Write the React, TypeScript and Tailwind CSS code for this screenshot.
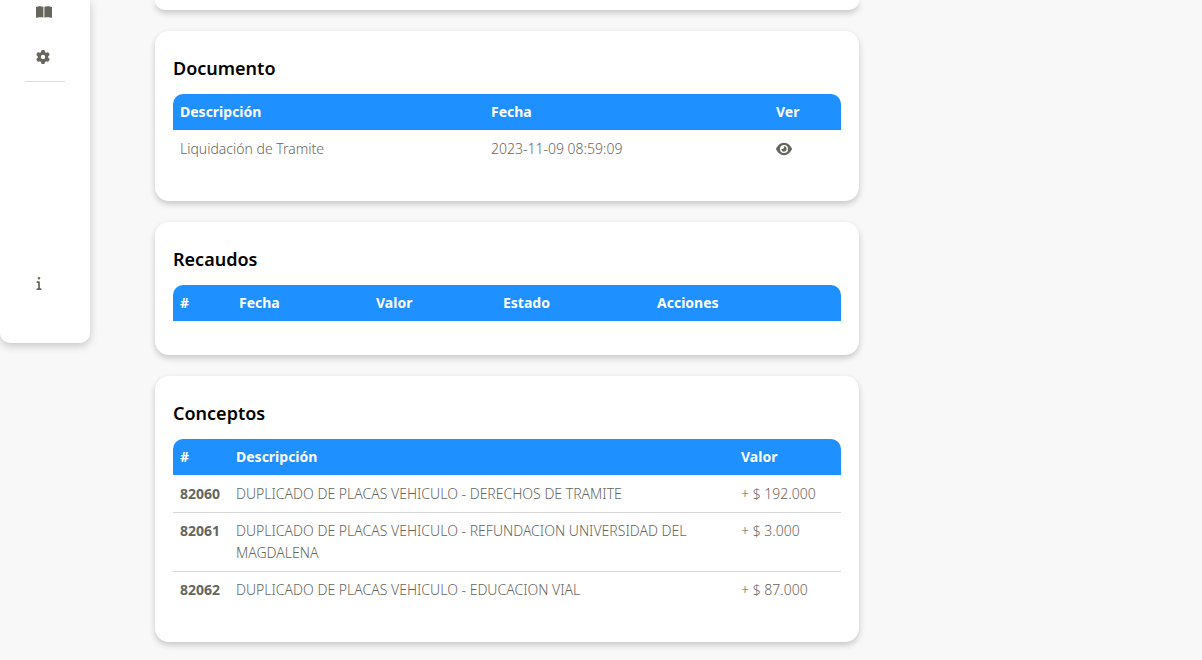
import React from 'react';
import { FaEye, FaGear, FaInfo } from 'react-icons/fa6';

const documentos = [
  { id: 1, descripcion: 'Liquidación de Tramite', fecha: '2023-11-09 08:59:09' }
];

const conceptos = [
  { id: 82060, descripcion: 'DUPLICADO DE PLACAS VEHICULO - DERECHOS DE TRAMITE', valor: '+ $ 192.000' },
  { id: 82061, descripcion: 'DUPLICADO DE PLACAS VEHICULO - REFUNDACION UNIVERSIDAD DEL MAGDALENA', valor: '+ $ 3.000' },
  { id: 82062, descripcion: 'DUPLICADO DE PLACAS VEHICULO - EDUCACION VIAL', valor: '+ $ 87.000' }
];

const BookIcon = () => (
  <svg width="18" height="14" viewBox="0 0 18 14" fill="currentColor" aria-hidden="true">
    <path d="M1 2.2C2.6 1.2 5.9.9 8.4 1.8V12.6C6 11.9 3.2 12 1 12.8Z" />
    <path d="M9.4 1.8C12 .9 15.3 1.2 17 2.2V12.8C14.8 12 12 11.9 9.4 12.6Z" />
  </svg>
);

const Card = ({ title, children }: { title: string; children: React.ReactNode }) => (
  <section className="bg-white rounded-[14px] shadow-[0_3px_6px_rgba(0,0,0,0.2)] px-[18px] pt-[18px] pb-[34px]">
    <h2 className="text-lg leading-[38px] mb-[7px] font-semibold text-black">{title}</h2>
    {children}
  </section>
);

const Table = ({ columns, children }: { columns: { label: string; width: string }[]; children?: React.ReactNode }) => (
  <table className="w-full table-fixed text-left text-sm leading-[22px]">
    <thead className="text-white">
      <tr>
        {columns.map((col) => (
          <th
            key={col.label}
            className={`${col.width} bg-[#1e90ff] p-[7px] font-bold first:rounded-tl-[10px] last:rounded-tr-[10px]`}
          >
            {col.label}
          </th>
        ))}
      </tr>
    </thead>
    <tbody className="font-light">{children}</tbody>
  </table>
);

const Sidebar = () => (
  <aside className="w-[90px] shrink-0 self-start bg-white rounded-b-[10px] shadow-[0_3px_8px_rgba(0,0,0,0.2)] pb-[49px]">
    <nav className="flex flex-col">
      <a href="#manual" aria-label="Manual" className="flex h-6 items-center pl-[35px]">
        <BookIcon />
      </a>
      <a href="#ajustes" aria-label="Ajustes" className="mt-[21px] flex h-6 items-center pl-9 text-sm">
        <FaGear />
      </a>
      <hr className="mx-[25px] mt-3 border-[#dedfd3]" />
      <a href="#info" aria-label="Información" className="mt-[190px] flex h-[22px] items-center pl-8 text-sm">
        <FaInfo />
      </a>
    </nav>
  </aside>
);

const App = () => {
  return (
    <div className="flex min-h-screen gap-[65px] bg-[#f8f8f8] font-['Noto_Sans',sans-serif] text-[#66665c]">
      <Sidebar />

      <main className="flex min-w-0 max-w-[704px] flex-1 flex-col gap-[21px] pb-[19px]">
        <div className="h-[10px] bg-white rounded-b-[14px] shadow-[0_3px_6px_rgba(0,0,0,0.2)]" />

        <Card title="Documento">
          <Table
            columns={[
              { label: 'Descripción', width: 'w-[311px]' },
              { label: 'Fecha', width: 'w-[285px]' },
              { label: 'Ver', width: 'w-[72px]' }
            ]}
          >
            {documentos.map((doc) => (
              <tr key={doc.id}>
                <td className="px-[7px] pt-2 pb-[7px]">{doc.descripcion}</td>
                <td className="px-[7px] pt-2 pb-[7px]">{doc.fecha}</td>
                <td className="px-[7px] pt-2 pb-[7px]">
                  <button type="button" aria-label="Ver documento" className="block text-base">
                    <FaEye />
                  </button>
                </td>
              </tr>
            ))}
          </Table>
        </Card>

        <Card title="Recaudos">
          <Table
            columns={[
              { label: '#', width: 'w-[59px]' },
              { label: 'Fecha', width: 'w-[137px]' },
              { label: 'Valor', width: 'w-[127px]' },
              { label: 'Estado', width: 'w-[154px]' },
              { label: 'Acciones', width: 'w-[191px]' }
            ]}
          />
        </Card>

        <Card title="Conceptos">
          <Table
            columns={[
              { label: '#', width: 'w-[56px]' },
              { label: 'Descripción', width: 'w-[505px]' },
              { label: 'Valor', width: 'w-[107px]' }
            ]}
          >
            {conceptos.map((concepto) => (
              <tr key={concepto.id} className="border-t border-[#d6d6d6] align-top first:border-white">
                <th scope="row" className="p-[7px] font-bold">{concepto.id}</th>
                <td className="p-[7px]">{concepto.descripcion}</td>
                <td className="p-[7px]">{concepto.valor}</td>
              </tr>
            ))}
          </Table>
        </Card>
      </main>
    </div>
  );
};

export default App;
